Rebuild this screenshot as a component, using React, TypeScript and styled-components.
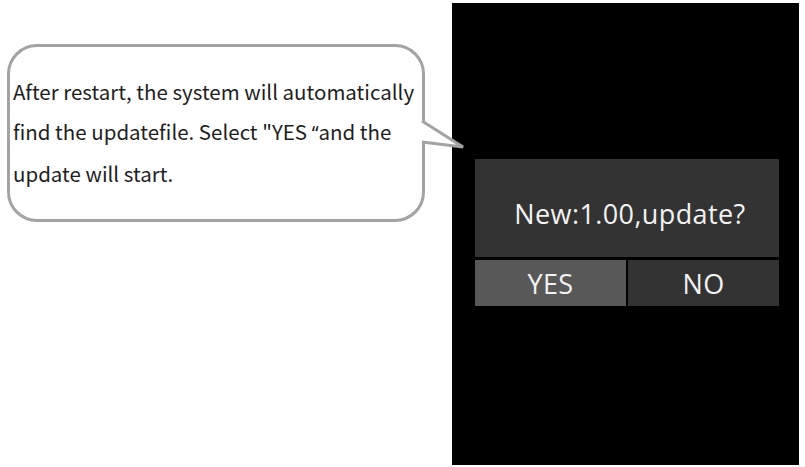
import React from 'react';
import styled, { createGlobalStyle } from 'styled-components';

const GlobalStyle = createGlobalStyle`
  html, body {
    margin: 0;
    padding: 0;
    background: #ffffff;
  }
  body {
    font-family: "Noto Sans CJK SC", "Noto Sans", sans-serif;
  }
`;

const Page = styled.div`
  width: 805px;
  height: 467px;
  display: flex;
  align-items: flex-start;
  overflow: hidden;
`;

const NoteArea = styled.div`
  width: 452px;
  flex-shrink: 0;
  padding: 44px 0 0 7px;
  box-sizing: border-box;
`;

const Bubble = styled.div`
  position: relative;
  width: 418px;
  height: 178px;
  box-sizing: border-box;
  border: 3px solid #a3a3a3;
  border-radius: 30px;
  background: #fff;
  padding: 24px 0 0 3px;
  font-size: 20.5px;
  line-height: 40px;
  color: #1e1e1e;
  white-space: nowrap;
`;

// the CJK face draws a full-width quote, the reference has a narrow one
const Quote = styled.span`
  font-family: "Noto Sans", sans-serif;
  font-size: 19px;
`;

const Tail = styled.svg`
  position: absolute;
  left: 412px;
  top: 74px;
  overflow: visible;
`;

const Screen = styled.div`
  width: 347px;
  height: 462px;
  margin-top: 3px;
  background: #000;
  flex-shrink: 0;
  padding: 156px 0 0 23px;
  box-sizing: border-box;
`;

const Dialog = styled.div`
  width: 304px;
  display: flex;
  flex-direction: column;
  gap: 3px;
  font-family: "Open Sans", "Noto Sans", sans-serif;
  color: #f2f2f2;
`;

const Message = styled.div`
  height: 98px;
  background: #333333;
  display: flex;
  align-items: center;
  justify-content: center;
  font-size: 27px;
  letter-spacing: 0.4px;
  padding: 10px 0 0 6px;
  box-sizing: border-box;
`;

const ButtonRow = styled.div`
  display: flex;
  gap: 2px;
`;

const Choice = styled.div<{ $selected?: boolean }>`
  flex: 1;
  height: 46px;
  background: ${(p) => (p.$selected ? '#585858' : '#333333')};
  display: flex;
  align-items: center;
  justify-content: center;
  font-size: 27px;
  letter-spacing: 0.4px;
`;

const App = () => {
  return (
    <Page>
      <GlobalStyle />
      <NoteArea>
        <Bubble>
          After restart, the system will automatically
          <br />
          find the updatefile. Select "YES <Quote>“</Quote>and the
          <br />
          update will start.
          <Tail width="48" height="28" viewBox="0 0 48 28">
            <path d="M0 0 L41 26 L0 21" fill="#fff" stroke="#a3a3a3" strokeWidth="3" strokeLinejoin="miter" />
          </Tail>
        </Bubble>
      </NoteArea>
      <Screen>
        <Dialog>
          <Message>New:1.00,update?</Message>
          <ButtonRow>
            <Choice $selected>YES</Choice>
            <Choice>NO</Choice>
          </ButtonRow>
        </Dialog>
      </Screen>
    </Page>
  );
};

export default App;
